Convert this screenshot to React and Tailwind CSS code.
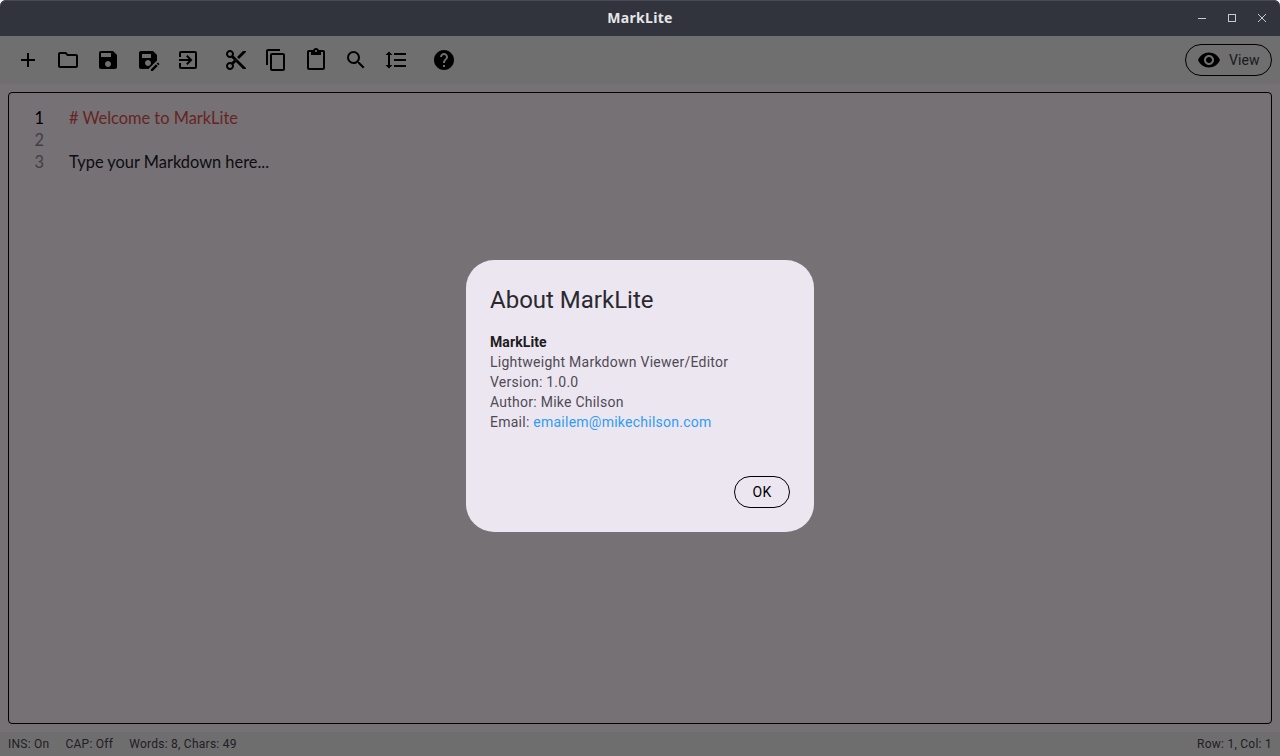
import React from "react";
import {
  MdAdd, MdOutlineFolder, MdSave, MdSaveAs, MdContentCut, MdContentCopy,
  MdContentPaste, MdSearch, MdFormatLineSpacing, MdHelp, MdVisibility,
} from "react-icons/md";

function InputIcon({ size }) {
  return (
    <svg width={size} height={size} viewBox="0 0 24 24" fill="currentColor">
      <path d="M19 3H5a2 2 0 0 0-2 2v4h2V5h14v14H5v-4H3v4a2 2 0 0 0 2 2h14a2 2 0 0 0 2-2V5a2 2 0 0 0-2-2z" />
      <path d="M10.09 15.59 11.5 17l5-5-5-5-1.41 1.41L12.67 11H3v2h9.67z" />
    </svg>
  );
}

const groups = [
  [MdAdd, MdOutlineFolder, MdSave, MdSaveAs, InputIcon],
  [MdContentCut, MdContentCopy, MdContentPaste, MdSearch, MdFormatLineSpacing],
  [MdHelp],
];

function TitleBar() {
  return (
    <div className="h-9 shrink-0 relative flex items-center justify-center pb-px bg-[#31343d] rounded-t-[6px] shadow-[inset_0_1px_0_#474a52]">
      <span className="font-['Noto_Sans',sans-serif] text-[14px] tracking-[0.3px] font-bold text-[#e6e6e8]">MarkLite</span>
      <div className="absolute right-[3px] top-0 h-full flex items-center text-[#c8c9cc]">
        <button className="w-[30px] h-full flex items-center justify-center">
          <svg width="10" height="10" viewBox="0 0 10 10"><path d="M1 5.5h8" stroke="currentColor" fill="none" /></svg>
        </button>
        <button className="w-[30px] h-full flex items-center justify-center">
          <svg width="10" height="10" viewBox="0 0 10 10"><rect x="1.5" y="1.5" width="7" height="7" stroke="currentColor" fill="none" /></svg>
        </button>
        <button className="w-[30px] h-full flex items-center justify-center">
          <svg width="10" height="10" viewBox="0 0 10 10"><path d="M1 1l8 8M9 1l-8 8" stroke="currentColor" fill="none" /></svg>
        </button>
      </div>
    </div>
  );
}

function Toolbar() {
  return (
    <div className="h-12 shrink-0 flex items-center justify-between pl-2 pr-2 bg-[#f1f1f1]">
      <div className="flex items-center gap-2">
        {groups.map((g, i) => (
          <div key={i} className="flex items-center">
            {g.map((Icon, j) => (
              <button key={j} className="w-10 h-10 flex items-center justify-center text-black">
                <Icon size={24} />
              </button>
            ))}
          </div>
        ))}
      </div>
      <button className="h-8 w-[87px] flex items-center gap-2 pl-[11px] rounded-full border border-black">
        <MdVisibility size={24} className="text-black" />
        <span className="text-[14px] tracking-[0.1px] text-[#3c3a3e] font-['Roboto',sans-serif]">View</span>
      </button>
    </div>
  );
}

function Editor() {
  return (
    <div className="flex-1 mx-2 mt-2 mb-2 rounded-[4px] border border-black pt-[14px] flex font-['Lato',sans-serif] text-[16.4px] leading-[22px]">
      <div className="w-[35px] text-right text-[#8f8b90]">
        <div className="text-black">1</div>
        <div>2</div>
        <div>3</div>
      </div>
      <div className="ml-[25px] text-[#1c1b1f]">
        <div className="text-[#e0504a]"># Welcome to MarkLite</div>
        <div className="h-[22px]" />
        <div>Type your Markdown here...</div>
      </div>
    </div>
  );
}

function StatusBar() {
  return (
    <div className="h-6 shrink-0 flex items-center justify-between px-2 bg-[#f1eff1] font-['Roboto',sans-serif] text-[12px] tracking-[0.25px] text-[#49454f]">
      <div className="flex items-center gap-4">
        <span>INS: On</span>
        <span>CAP: Off</span>
        <span>Words: 8, Chars: 49</span>
      </div>
      <span>Row: 1, Col: 1</span>
    </div>
  );
}

function AboutDialog() {
  return (
    <div className="absolute inset-0 bg-black/[0.54] flex items-center justify-center font-['Roboto',sans-serif]">
      <div className="w-[348px] h-[272px] rounded-[28px] bg-[#ece6f0] p-6 flex flex-col">
        <h2 className="text-[24px] leading-8 text-[#2b2930]">About MarkLite</h2>
        <div className="mt-4 text-[14px] leading-5 tracking-[0.25px] text-[#4f4b55]">
          <div className="font-bold text-[#1d1b20] tracking-[0.1px]">MarkLite</div>
          <div>Lightweight Markdown Viewer/Editor</div>
          <div>Version: 1.0.0</div>
          <div>Author: Mike Chilson</div>
          <div>
            Email: <span className="text-[#2f9df4]">emailem@mikechilson.com</span>
          </div>
        </div>
        <div className="mt-auto flex justify-end">
          <button className="w-14 h-8 rounded-full border border-black text-[14px] tracking-[0.3px] text-black">OK</button>
        </div>
      </div>
    </div>
  );
}

export default function App() {
  return (
    <div className="w-[1280px] h-[756px] flex flex-col overflow-hidden bg-[#fef7ff]">
      <TitleBar />
      <div className="flex-1 min-h-0 relative flex flex-col">
        <Toolbar />
        <Editor />
        <StatusBar />
        <AboutDialog />
      </div>
    </div>
  );
}
